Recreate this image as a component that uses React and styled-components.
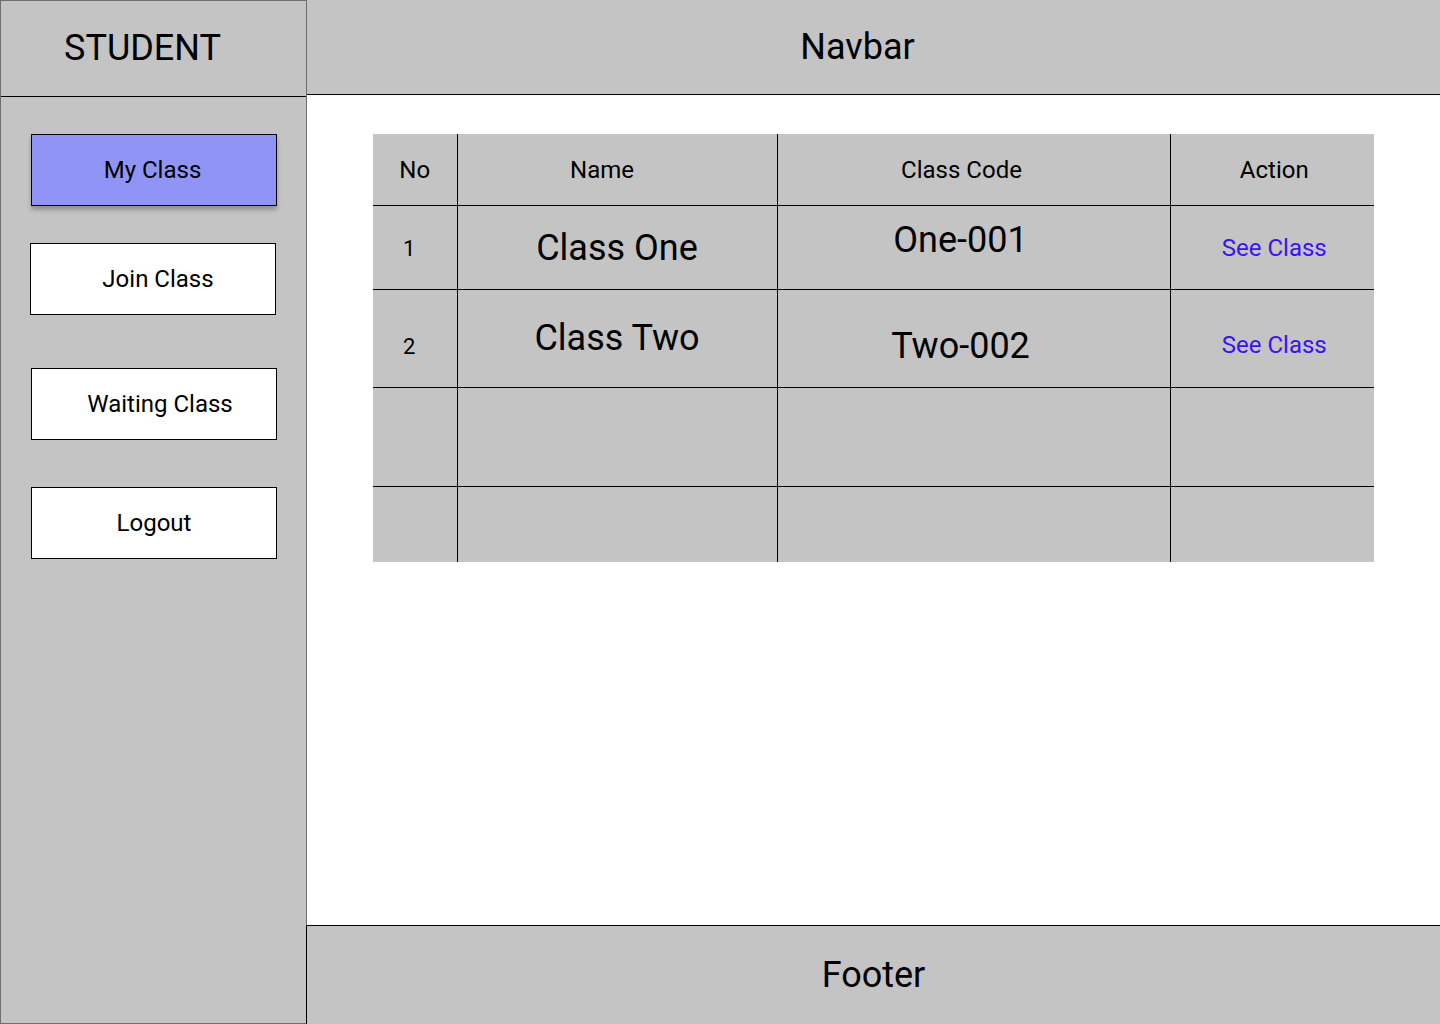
import React from "react";
import styled, { createGlobalStyle } from "styled-components";

const GlobalStyle = createGlobalStyle`
  html, body {
    margin: 0;
    padding: 0;
    background: #ffffff;
    font-family: Roboto, "Liberation Sans", Arial, sans-serif;
    color: #000000;
  }
  * { box-sizing: border-box; }
`;

const Page = styled.div`
  display: grid;
  grid-template-columns: 307px 1fr;
  width: 1440px;
  height: 1024px;
`;

const Sidebar = styled.aside`
  display: flex;
  flex-direction: column;
  background: #c4c4c4;
  border: 1px solid #6e6e6e;
`;

const Brand = styled.div`
  height: 96px;
  display: flex;
  align-items: center;
  justify-content: center;
  padding: 0 22px 2px 0;
  border-bottom: 1px solid #000;
  font-size: 36px;
`;

const Menu = styled.nav`
  display: flex;
  flex-direction: column;
  padding: 37px 0 0 29px;
`;

const MenuButton = styled.button`
  width: 246px;
  height: 72px;
  margin-top: ${(p) => p.$gap || 0}px;
  margin-left: ${(p) => p.$offset || 0}px;
  padding: 0 ${(p) => p.$pr || 0}px 0 ${(p) => p.$nudge || 0}px;
  border: 1px solid #000;
  background: ${(p) => (p.$active ? "#8f94f6" : "#ffffff")};
  box-shadow: ${(p) => (p.$active ? "0 4px 4px rgba(0,0,0,0.25)" : "none")};
  font-family: inherit;
  font-size: 24px;
  color: #000;
  cursor: pointer;
`;

const Main = styled.div`
  display: flex;
  flex-direction: column;
  min-width: 0;
`;

const Navbar = styled.header`
  height: 95px;
  display: flex;
  align-items: center;
  justify-content: center;
  padding-right: 32px;
  background: #c4c4c4;
  border-bottom: 1px solid #000;
  font-size: 36px;
`;

const Content = styled.main`
  flex: 1;
  background: #ffffff;
  padding: 39px 0 0 66px;
`;

const Table = styled.table`
  width: 1001px;
  border-collapse: collapse;
  table-layout: fixed;
  background: #c4c4c4;
`;

const Row = styled.tr`
  height: ${(p) => p.$h}px;
`;

const HeadCell = styled.th`
  font-weight: 400;
  font-size: 24px;
  text-align: center;
  vertical-align: middle;
  padding: 2px ${(p) => p.$pr || 0}px 0 ${(p) => p.$pl || 0}px;
  border-right: 1px solid #000;
  border-bottom: 1px solid #000;
  &:last-child { border-right: none; }
`;

const Cell = styled.td`
  font-size: ${(p) => p.$size || 24}px;
  text-align: ${(p) => (p.$left ? "left" : "center")};
  vertical-align: middle;
  padding: ${(p) => (p.$pt || 0) + 2}px ${(p) => p.$pr || 0}px ${(p) => p.$pb || 0}px ${(p) => p.$pl || 0}px;
  border-right: 1px solid #000;
  border-bottom: 1px solid #000;
  &:last-child { border-right: none; }
  tr:last-child > & { border-bottom: none; }
`;

const Link = styled.a`
  color: #3a14f0;
  text-decoration: none;
  cursor: pointer;
`;

const Footer = styled.footer`
  height: 99px;
  display: flex;
  align-items: center;
  justify-content: center;
  background: #c4c4c4;
  border-top: 1px solid #000;
  border-left: 1px solid #000;
  margin-left: -1px;
  font-size: 36px;
`;

const classes = [
  { no: 1, name: "Class One", code: "One-001", h: 84, codePt: 0, codePb: 16, noPt: 0, linkPt: 0, namePb: 0 },
  { no: 2, name: "Class Two", code: "Two-002", h: 98, codePt: 14, codePb: 0, noPt: 14, linkPt: 12, namePb: 2 },
];

export default function App() {
  return (
    <>
      <GlobalStyle />
      <Page>
        <Sidebar>
          <Brand>STUDENT</Brand>
          <Menu>
            <MenuButton $active $offset={1} $pr={3}>My Class</MenuButton>
            <MenuButton $gap={37} $nudge={10}>Join Class</MenuButton>
            <MenuButton $gap={53} $offset={1} $nudge={12}>Waiting Class</MenuButton>
            <MenuButton $gap={47} $offset={1}>Logout</MenuButton>
          </Menu>
        </Sidebar>
        <Main>
          <Navbar>Navbar</Navbar>
          <Content>
            <Table>
              <colgroup>
                <col style={{ width: 84 }} />
                <col style={{ width: 320 }} />
                <col style={{ width: 393 }} />
                <col style={{ width: 204 }} />
              </colgroup>
              <thead>
                <Row $h={71}>
                  <HeadCell>No</HeadCell>
                  <HeadCell $pr={30}>Name</HeadCell>
                  <HeadCell $pr={24}>Class Code</HeadCell>
                  <HeadCell $pl={4}>Action</HeadCell>
                </Row>
              </thead>
              <tbody>
                {classes.map((c) => (
                  <Row key={c.no} $h={c.h}>
                    <Cell $left $size={22} $pl={30} $pt={c.noPt}>{c.no}</Cell>
                    <Cell $size={36} $pb={c.namePb}>{c.name}</Cell>
                    <Cell $size={36} $pr={26} $pt={c.codePt} $pb={c.codePb}>{c.code}</Cell>
                    <Cell $pl={4} $pt={c.linkPt}>
                      <Link>See Class</Link>
                    </Cell>
                  </Row>
                ))}
                <Row $h={99}>
                  <Cell />
                  <Cell />
                  <Cell />
                  <Cell />
                </Row>
                <Row $h={76}>
                  <Cell />
                  <Cell />
                  <Cell />
                  <Cell />
                </Row>
              </tbody>
            </Table>
          </Content>
          <Footer>Footer</Footer>
        </Main>
      </Page>
    </>
  );
}
